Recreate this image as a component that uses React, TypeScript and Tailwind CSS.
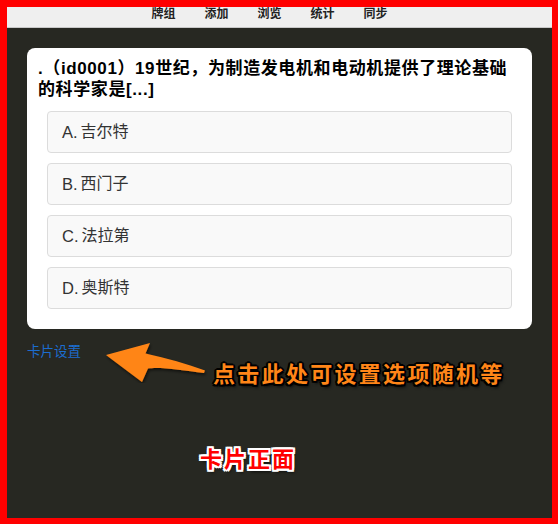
const NAV = ["牌组", "添加", "浏览", "统计", "同步"];

const OPTIONS = [
  { key: "A", text: "吉尔特" },
  { key: "B", text: "西门子" },
  { key: "C", text: "法拉第" },
  { key: "D", text: "奥斯特" },
];

const FONT = "font-['Liberation_Sans','Noto_Sans_CJK_SC',sans-serif]";

export default function App() {
  return (
    <div
      className={`relative flex h-[524px] w-[558px] flex-col overflow-hidden border-t-[7px] border-l-[7px] border-r-[6px] border-b-[6px] border-[#ff0000] bg-[#272822] ${FONT}`}
    >
      {/* ── Top nav ── */}
      <nav className="flex h-[21px] shrink-0 justify-center gap-[29px] border-b border-[#c8c8c8] bg-[#efefef] pr-[20px]">
        {NAV.map((n) => (
          <span key={n} className="text-[12px] font-bold leading-[14px] text-[#222]">
            {n}
          </span>
        ))}
      </nav>

      {/* ── Card ── */}
      <main className="relative flex-1 px-5 pt-5">
        <div className="rounded-lg bg-white pb-5">
          <p className="px-[11px] pt-[10px] text-[17px] font-bold leading-[21px] tracking-[0.6px] text-black">
            .（id0001）19世纪，为制造发电机和电动机提供了理论基础的科学家是[...]
          </p>
          <ul className="mt-[11px] flex flex-col gap-[10px] px-5">
            {OPTIONS.map((o) => (
              <li
                key={o.key}
                className="flex rounded border border-[#dcdcdc] bg-[#f9f9f9] px-[14px] py-[8px] text-[16px] leading-[24px] text-[#333]"
              >
                <span className="text-[16.5px]">{o.key}.</span>
                <span className="ml-[3px]">{o.text}</span>
              </li>
            ))}
          </ul>
        </div>

        <a className="mt-[13px] block text-[13.5px] leading-[20px] text-[#1c6dd0]">
          卡片设置
        </a>

        {/* ── Annotations ── */}
        <svg
          className="pointer-events-none absolute left-[92px] top-[307px]"
          width="112"
          height="48"
          viewBox="92 335 112 48"
        >
          <defs>
            <filter id="sh" x="-20%" y="-20%" width="140%" height="160%">
              <feDropShadow dx="1" dy="2" stdDeviation="1.5" floodColor="#000" floodOpacity="0.6" />
            </filter>
          </defs>
          <path
            d="M99,355 L143,343 L138.5,353.5 C160,358 180,364 198,370.5 L197,373 C175,370 152,366.5 141,368.5 L135,382 Z"
            fill="#ff8518"
            filter="url(#sh)"
          />
        </svg>
        <span className="pointer-events-none absolute left-[206px] top-[333px] text-[22px] font-bold leading-[28px] tracking-[2.3px] text-[#ff8518] [text-shadow:-1.5px_-1.5px_0_#000,1.5px_-1.5px_0_#000,-1.5px_1.5px_0_#000,1.5px_1.5px_0_#000,0_2px_0_#000,2px_0_0_#000,-2px_0_0_#000,0_-2px_0_#000,2px_3px_3px_rgba(0,0,0,0.7)]">
          点击此处可设置选项随机等
        </span>
        <span className="pointer-events-none absolute left-[193px] top-[418px] text-[22px] font-bold leading-[28px] tracking-[2px] text-[#ff0000] [text-shadow:-2px_-2px_0_#fff,2px_-2px_0_#fff,-2px_2px_0_#fff,2px_2px_0_#fff,0_2px_0_#fff,2px_0_0_#fff,-2px_0_0_#fff,0_-2px_0_#fff,2px_3px_3px_rgba(0,0,0,0.7)]">
          卡片正面
        </span>
      </main>
    </div>
  );
}
